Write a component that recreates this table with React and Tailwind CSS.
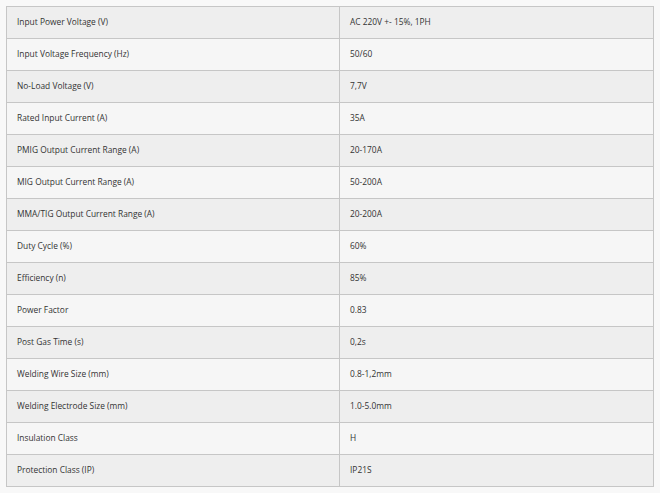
const specs = [
  ['Input Power Voltage (V)', 'AC 220V +- 15%, 1PH'],
  ['Input Voltage Frequency (Hz)', '50/60'],
  ['No-Load Voltage (V)', '7,7V'],
  ['Rated Input Current (A)', '35A'],
  ['PMIG Output Current Range (A)', '20-170A'],
  ['MIG Output Current Range (A)', '50-200A'],
  ['MMA/TIG Output Current Range (A)', '20-200A'],
  ['Duty Cycle (%)', '60%'],
  ['Efficiency (n)', '85%'],
  ['Power Factor', '0.83'],
  ['Post Gas Time (s)', '0,2s'],
  ['Welding Wire Size (mm)', '0.8-1,2mm'],
  ['Welding Electrode Size (mm)', '1.0-5.0mm'],
  ['Insulation Class', 'H'],
  ['Protection Class (IP)', 'IP21S'],
]

export default function App() {
  return (
    <div className="min-h-[493px] w-[660px] bg-[#f8f8f8] pl-[6px] pt-[6px] font-['Open_Sans',sans-serif] text-[8.4px] text-[#333]">
      <table className="w-[648px] border-collapse border border-[#c6c6c6]">
        <tbody>
          {specs.map(([label, value], i) => (
            <tr key={label} className={i % 2 === 0 ? 'bg-[#eeeeee]' : 'bg-[#f6f6f6]'}>
              <td className="h-[32px] w-[333px] border border-[#c6c6c6] pl-[10px] align-middle">{label}</td>
              <td className="h-[32px] border border-[#c6c6c6] pl-[10px] align-middle">{value}</td>
            </tr>
          ))}
        </tbody>
      </table>
    </div>
  )
}
